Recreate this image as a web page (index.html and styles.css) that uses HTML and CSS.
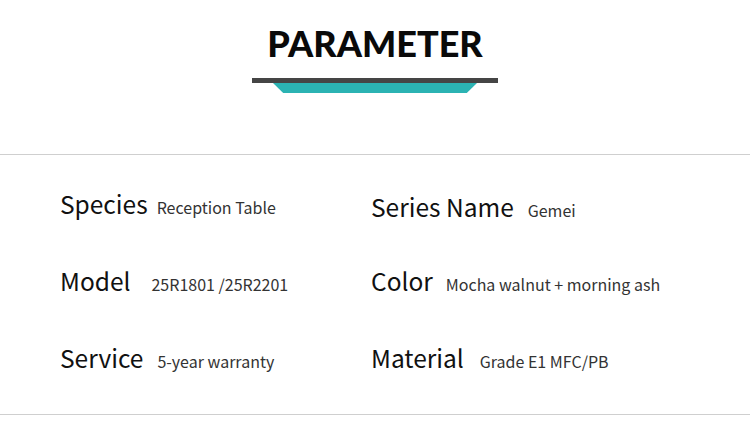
FILE: index.html
```html
<!DOCTYPE html>
<html>
<head>
<meta charset="utf-8">
<link rel="stylesheet" href="styles.css">
</head>
<body>
<div class="page">
  <header class="head">
    <h1 class="title">PARAMETER</h1>
    <div class="bar"></div>
    <div class="tab"></div>
  </header>
  <section class="params">
    <div class="item"><span class="label">Species</span><span class="value">Reception Table</span></div>
    <div class="item item-b"><span class="label">Series Name</span><span class="value v-5">Gemei</span></div>
    <div class="item"><span class="label">Model</span><span class="value v-12">25R1801 /25R2201</span></div>
    <div class="item"><span class="label">Color</span><span class="value v-4">Mocha walnut + morning ash</span></div>
    <div class="item"><span class="label">Service</span><span class="value v-5">5-year warranty</span></div>
    <div class="item"><span class="label">Material</span><span class="value v-7">Grade E1 MFC/PB</span></div>
  </section>
</div>
</body>
</html>
```

FILE: styles.css
```css
html, body {
  margin: 0;
  padding: 0;
  background: #fff;
}
.page {
  width: 750px;
  height: 424px;
  overflow: hidden;
}
.head {
  display: flex;
  flex-direction: column;
  align-items: center;
  height: 155px;
  border-bottom: 1px solid #cfcfcf;
  box-sizing: border-box;
  padding-top: 19px;
}
.title {
  margin: 0;
  font-family: Lato, "DejaVu Sans", sans-serif;
  font-weight: 900;
  font-size: 36px;
  line-height: 48px;
  color: #0a0a0a;
}
.bar {
  margin-top: 11px;
  width: 246px;
  height: 5px;
  background: #454545;
}
.tab {
  width: 204px;
  height: 10px;
  background: #2bb3b3;
  clip-path: polygon(0 0, 100% 0, 95% 100%, 5% 100%);
}
.params {
  display: grid;
  grid-template-columns: 311px 1fr;
  grid-auto-rows: 77px;
  padding: 31px 0 0 60px;
  height: 260px;
  box-sizing: border-box;
  border-bottom: 1px solid #cfcfcf;
}
.item {
  display: flex;
  align-items: baseline;
  gap: 9px;
  height: 36px;
}
.item-b {
  margin-top: 3px;
}
.label {
  font-family: "Noto Sans CJK SC", "Noto Sans", sans-serif;
  font-weight: 400;
  font-size: 24.5px;
  color: #111;
}
.value {
  font-family: "Noto Sans CJK SC", "Noto Sans", sans-serif;
  font-size: 16px;
  color: #333;
}
.v-4 { margin-left: 4px; }
.v-5 { margin-left: 5px; }
.v-7 { margin-left: 7px; }
.v-12 { margin-left: 12px; }
```
